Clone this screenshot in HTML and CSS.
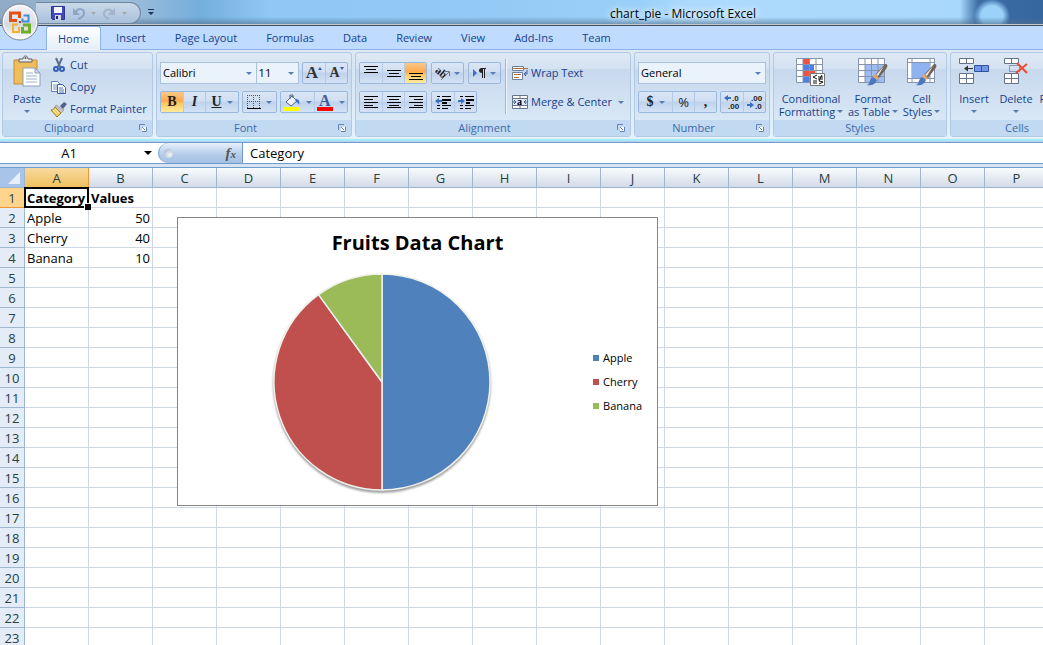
FILE: index.html
```html
<!DOCTYPE html>
<html lang="en">
<head>
<meta charset="utf-8">
<title>chart_pie - Microsoft Excel</title>
<link rel="stylesheet" href="styles.css">
</head>
<body>
<div class="app">
  <header class="titlebar">
    <button class="office" aria-label="Office Button">
      <svg width="38" height="38" viewBox="0 0 38 38">
        <defs><linearGradient id="orb" x1="0" y1="0" x2="0" y2="1"><stop offset="0" stop-color="#f4f5f8"/><stop offset=".45" stop-color="#dfe2e9"/><stop offset=".55" stop-color="#d3d7e0"/><stop offset="1" stop-color="#fff"/></linearGradient></defs>
        <circle cx="19" cy="19" r="18" fill="url(#orb)" stroke="#7c8796"/>
        <circle cx="19" cy="19" r="16.500" fill="none" stroke="#fff" stroke-opacity=".8"/>
        <g fill="none">
          <path d="M16 17.500H9.500V10h9v5" stroke="#e2521a" stroke-width="3"/>
          <path d="M22.500 12.500h5v6h-6v-3" stroke="#3f8ed8" stroke-width="2"/>
          <path d="M17 21.500h-5V29h6v-5" stroke="#f3b229" stroke-width="2"/>
          <path d="M22 22h6.500v7h-7v-5" stroke="#6fae2c" stroke-width="3"/>
        </g>
        <path d="M18 18h2v2h-2z" fill="#b0402a"/>
      </svg>
    </button>
    <div class="qat">
      <button class="qbtn" aria-label="Save"><svg width="14" height="14" viewBox="0 0 14 14"><path d="M.5.500h13v13h-12l-1-1z" fill="#4549b8" stroke="#30348f"/><path d="M3 1h8v6H3z" fill="#f4f6ff"/><path d="M4 9h6v5H4z" fill="#d3d8e8"/><path d="M5 10h2v3H5z" fill="#262a66"/></svg></button>
      <button class="qbtn" aria-label="Undo"><svg width="22" height="14" viewBox="0 0 22 14"><path d="M3 6c2-4 8-4 8 1 0 3-3 5-6 6" fill="none" stroke="#8ea4c6" stroke-width="2"/><path d="M0 2v7h7z" fill="#8ea4c6"/><path d="M18 6h5l-2.500 3z" fill="#a8a8a8"/></svg></button>
      <button class="qbtn" aria-label="Redo"><svg width="24" height="14" viewBox="0 0 24 14"><path d="M9 6C7 2 1 3 1 8c0 2 2 4 5 5" fill="none" stroke="#a3b3c9" stroke-width="2"/><path d="M12 2v7H5z" fill="#a3b3c9"/><path d="M19 6h5l-2.500 3z" fill="#a8a8a8"/></svg></button>
    </div>
    <button class="qmore" aria-label="Customize Quick Access Toolbar"><svg width="6" height="6" viewBox="0 0 6 6"><path d="M0 0h6v1H0zM0 3h6L3 6z" fill="#1d3863"/></svg></button>
    <h1 class="title">chart_pie - Microsoft Excel</h1>
  </header>

  <nav class="tabs">
    <button class="tab tab-on">Home</button>
    <button class="tab">Insert</button>
    <button class="tab">Page Layout</button>
    <button class="tab">Formulas</button>
    <button class="tab">Data</button>
    <button class="tab">Review</button>
    <button class="tab">View</button>
    <button class="tab">Add-Ins</button>
    <button class="tab">Team</button>
  </nav>

  <div class="ribbon">
    <section class="group clipboard">
      <div class="body">
        <button class="big">
          <svg width="30" height="32" viewBox="0 0 30 32"><path d="M2 5h23v24H2z" fill="#efbd5b" stroke="#c78e2f"/><path d="M7 7V4h4c0-4 5-4 5 0h4v3z" fill="#e8e8ea" stroke="#5e6068"/><circle cx="13.500" cy="3" r="1" fill="#555"/><path d="M11 13h12l5 5v13H11z" fill="#fff" stroke="#8da0bd"/><path d="M23 13v5h5z" fill="#cfdcee" stroke="#8da0bd"/><path d="M14 18h7M14 21h11M14 24h11M14 27h11" stroke="#9bb0ce"/></svg>
          <span>Paste</span><i class="caret"></i>
        </button>
        <div class="stack">
          <button class="small"><svg width="16" height="16" viewBox="0 0 16 16"><path d="M5 1l4 9M11 1l-4 9" stroke="#5d6f8e" stroke-width="2"/><circle cx="5" cy="12" r="2" fill="none" stroke="#3560b5" stroke-width="2"/><circle cx="11" cy="12" r="2" fill="none" stroke="#3560b5" stroke-width="2"/></svg><span>Cut</span></button>
          <button class="small"><svg width="16" height="16" viewBox="0 0 16 16"><path d="M.5 2.500h6l3 3v7h-9z" fill="#fff" stroke="#5f80b8"/><path d="M2 6h4M2 8h4M2 10h4" stroke="#6f93cb"/><path d="M6.500 5.500h5l3 3v6h-8z" fill="#fff" stroke="#3b5fa2"/><path d="M8 9h4M8 11h5M8 13h5" stroke="#4a74ba"/></svg><span>Copy</span></button>
          <button class="small"><svg width="16" height="16" viewBox="0 0 16 16"><path d="M9 5l4-4 3 2-4 5z" fill="#54618a"/><path d="M5 4l8 5-3 3-6-6z" fill="#c3c5cc" stroke="#777" stroke-width=".5"/><path d="M4 6l6 6-4 4-6-7c2 0 3-1 4-3z" fill="#f0cf61" stroke="#a77b20"/><path d="M2 9l4 4M4 8l4 4" stroke="#fff2a8"/></svg><span>Format Painter</span></button>
        </div>
      </div>
      <h2 class="label"><span>Clipboard</span><button class="launch" aria-label="Clipboard options"><svg width="8" height="8" viewBox="0 0 8 8"><path d="M.5 6V.500H6" fill="none" stroke="#6484b3"/><path d="M3 3h5v5H3z" fill="#fff"/><path d="M3 3l3 3M7.500 3v4.500H3" fill="none" stroke="#6484b3"/></svg></button></h2>
    </section>

    <section class="group font">
      <div class="body rows">
        <div class="row">
          <span class="combo face"><select aria-label="Font"><option>Calibri</option></select><i class="caret"></i></span>
          <span class="combo size"><select aria-label="Font size"><option>11</option></select><i class="caret"></i></span>
          <div class="set push">
            <button class="glyph grow" aria-label="Grow font">A<i class="tri-up"></i></button><button class="glyph shrink" aria-label="Shrink font">A<i class="tri-down"></i></button>
          </div>
        </div>
        <div class="row">
          <div class="set">
            <button class="glyph on"><b>B</b></button><button class="glyph"><em>I</em></button><button class="glyph wide"><u>U</u><i class="caret"></i></button>
          </div>
          <div class="set">
            <button class="wide" aria-label="Borders"><svg width="14" height="14" viewBox="0 0 14 14"><path d="M.5 0v13M6.500 0v13M12.500 0v13M0 .5h13M0 6.500h13" stroke="#555" stroke-dasharray="1 1"/><path d="M0 13.500h14" stroke="#000"/></svg><i class="caret"></i></button>
          </div>
          <div class="set">
            <button class="wide" aria-label="Fill color"><svg width="17" height="17" viewBox="0 0 17 17"><path d="M2 8l6-6 5 5-6 5z" fill="#eef3fa" stroke="#51647f"/><path d="M6 5V1h3v3" fill="none" stroke="#51647f"/><path d="M11 5c4 0 5 2 4 6-1-2-2-3-3-3z" fill="#3b6fc4"/><path d="M0 13h16v4H0z" fill="#ff0"/></svg><i class="caret"></i></button><button class="wide" aria-label="Font color"><svg width="17" height="17" viewBox="0 0 17 17"><text class="fontcolor" x="2" y="12">A</text><path d="M0 13h16v4H0z" fill="red"/></svg><i class="caret"></i></button>
          </div>
        </div>
      </div>
      <h2 class="label"><span>Font</span><button class="launch" aria-label="Font options"><svg width="8" height="8" viewBox="0 0 8 8"><path d="M.5 6V.500H6" fill="none" stroke="#6484b3"/><path d="M3 3h5v5H3z" fill="#fff"/><path d="M3 3l3 3M7.500 3v4.500H3" fill="none" stroke="#6484b3"/></svg></button></h2>
    </section>

    <section class="group alignment">
      <div class="body">
        <div class="rows">
          <div class="row">
            <div class="set">
              <button aria-label="Top align"><svg width="14" height="16" viewBox="0 0 14 16"><path d="M0 1.500h14M2 4.500h10M0 7.500h14" stroke="#000"/></svg></button><button aria-label="Middle align"><svg width="14" height="16" viewBox="0 0 14 16"><path d="M0 5.500h14M2 8.500h10M0 11.500h14" stroke="#000"/></svg></button><button class="on" aria-label="Bottom align"><svg width="14" height="16" viewBox="0 0 14 16"><path d="M0 8.500h14M2 11.500h10M0 14.500h14" stroke="#000"/></svg></button>
            </div>
            <div class="set">
              <button class="wide" aria-label="Orientation"><svg width="16" height="16" viewBox="0 0 16 16"><text class="ab" x="0" y="11" transform="rotate(40 6 8)">ab</text><path d="M6 15l8-8M10 6.500h4.500V11" fill="none" stroke="#777"/></svg><i class="caret"></i></button>
            </div>
            <div class="set">
              <button class="wide" aria-label="Text direction"><svg width="14" height="12" viewBox="0 0 14 12"><path d="M0 2l4 4-4 4z" fill="#3f6fc5"/><path d="M9.500 2v9M11.500 2v9M8 1.500h5" stroke="#222"/><path d="M9 1v5C5 6 5 1 9 1z" fill="#222"/></svg><i class="caret"></i></button>
            </div>
          </div>
          <div class="row">
            <div class="set">
              <button aria-label="Align left"><svg width="14" height="12" viewBox="0 0 14 12"><path d="M0 .5h14M0 3.500h9M0 6.500h14M0 9.500h9M0 11.500h14" stroke="#000"/></svg></button><button aria-label="Center"><svg width="14" height="12" viewBox="0 0 14 12"><path d="M0 .5h14M2 3.500h10M0 6.500h14M2 9.500h10M0 11.500h14" stroke="#000"/></svg></button><button aria-label="Align right"><svg width="14" height="12" viewBox="0 0 14 12"><path d="M0 .5h14M5 3.500h9M0 6.500h14M5 9.500h9M0 11.500h14" stroke="#000"/></svg></button>
            </div>
            <div class="set">
              <button aria-label="Decrease indent"><svg width="16" height="14" viewBox="0 0 16 14"><path d="M2 1.500h3M7 1.500h9M7 10.500h9M2 10.500h3M2 13.500h3M7 13.500h6" stroke="#000"/><path d="M7 5h9M7 8h5" stroke="#000" stroke-width="2"/><path d="M0 6l4-3v2h3v2H4v2z" fill="#3b6fc4"/></svg></button><button aria-label="Increase indent"><svg width="16" height="14" viewBox="0 0 16 14"><path d="M2 1.500h3M7 1.500h9M7 10.500h9M2 10.500h3M2 13.500h3M7 13.500h6" stroke="#000"/><path d="M8 5h8M8 8h4" stroke="#000" stroke-width="2"/><path d="M7 6L3 3v2H0v2h3v2z" fill="#3b6fc4"/></svg></button>
            </div>
          </div>
        </div>
        <div class="rows split">
          <button class="text"><svg width="16" height="16" viewBox="0 0 16 16"><path d="M.5 1.500h11v4H.5zM.5 7.500h10v7H.5z" fill="#fff" stroke="#6f7f96"/><path d="M1 3.500h15M2 9.500h7M2 12.500h5" stroke="#b0703c"/><path d="M15 5v4h-2M14 7l-2 2 2 2" fill="none" stroke="#3b5fa2"/></svg><span>Wrap Text</span></button>
          <button class="text"><svg width="16" height="16" viewBox="0 0 16 16"><path d="M.5 1.500h15v13H.5zM8 1v13M.5 4.500h15M.5 11.500h15" fill="#fff" stroke="#66758c"/><path d="M1 5h14v6H1z" fill="#dfe8f5"/><path d="M1 8h3M12 8h3M2 6l2 2-2 2M14 6l-2 2 2 2" fill="none" stroke="#3b5fa2"/><text class="a" x="5" y="11">a</text></svg><span>Merge &amp; Center</span><i class="caret"></i></button>
        </div>
      </div>
      <h2 class="label"><span>Alignment</span><button class="launch" aria-label="Alignment options"><svg width="8" height="8" viewBox="0 0 8 8"><path d="M.5 6V.500H6" fill="none" stroke="#6484b3"/><path d="M3 3h5v5H3z" fill="#fff"/><path d="M3 3l3 3M7.500 3v4.500H3" fill="none" stroke="#6484b3"/></svg></button></h2>
    </section>

    <section class="group number">
      <div class="body rows">
        <div class="row">
          <span class="combo format"><select aria-label="Number format"><option>General</option></select><i class="caret"></i></span>
        </div>
        <div class="row">
          <div class="set">
            <button class="glyph wide"><b>$</b><i class="caret"></i></button><button class="pct">%</button><button class="glyph"><b>,</b></button>
          </div>
          <div class="set push">
            <button aria-label="Increase decimal"><svg width="16" height="14" viewBox="0 0 16 14"><path d="M0 3l4-3v2h3v2H4v2z" fill="#3b6fc4"/><text class="dec" x="8" y="6">.0</text><text class="dec" x="4" y="14">.00</text></svg></button><button aria-label="Decrease decimal"><svg width="16" height="14" viewBox="0 0 16 14"><path d="M7 10L3 7v2H0v2h3v2z" fill="#3b6fc4"/><text class="dec" x="4" y="6">.00</text><text class="dec" x="8" y="14">.0</text></svg></button>
          </div>
        </div>
      </div>
      <h2 class="label"><span>Number</span><button class="launch" aria-label="Number options"><svg width="8" height="8" viewBox="0 0 8 8"><path d="M.5 6V.500H6" fill="none" stroke="#6484b3"/><path d="M3 3h5v5H3z" fill="#fff"/><path d="M3 3l3 3M7.500 3v4.500H3" fill="none" stroke="#6484b3"/></svg></button></h2>
    </section>

    <section class="group styles">
      <div class="body">
        <button class="big">
          <svg width="30" height="32" viewBox="0 0 30 32"><path d="M.5 3.500h26v24H.5z" fill="#fff"/><path d="M7 4h6v6H7z" fill="#ee5140"/><path d="M7 10h11v6H7z" fill="#4f7fe0"/><path d="M7 16h12v6H7z" fill="#ee5140"/><path d="M7 22h6v6H7z" fill="#4f7fe0"/><path d="M.5 3.500h26v24H.5zM7 3v25M13.500 3v25M20 3v25M0 9.500h27M0 15.500h27M0 21.500h27" fill="none" stroke="#8493ae"/><path d="M14.500 18.500h14v12h-14z" fill="#fff" stroke="#777"/><path d="M21 20l-4 2 4 2M17 26h4M17 28h4M22 22h5M22 24h5M26 20l-3 6M23 26l4 1-4 2" fill="none" stroke="#111"/></svg>
          <span>Conditional</span><span>Formatting <i class="caret"></i></span>
        </button>
        <button class="big">
          <svg width="30" height="32" viewBox="0 0 30 32"><path d="M.5 3.500h26v24H.5z" fill="#fff"/><path d="M7 9h20v19H7z" fill="#9dbcf2"/><path d="M.5 3.500h26v24H.5zM7 3v25M13.500 3v25M20 3v25M0 9.500h27M0 15.500h27M0 21.500h27" fill="none" stroke="#8493ae"/><path d="M27 9c3 0 3 2 1 5l-8 10-4-3z" fill="#74635a"/><path d="M26 11l-8 9 2 1z" fill="#efe7dc"/><path d="M17 19l4 4-2 2-4-3z" fill="#e5a66b"/><path d="M15 22l4 3c-2 5-7 6-10 5 4-2 2-6 6-8z" fill="#4e76c0"/></svg>
          <span>Format</span><span>as Table <i class="caret"></i></span>
        </button>
        <button class="big">
          <svg width="30" height="32" viewBox="0 0 30 32"><path d="M.5 3.500h27v24H.5z" fill="#fff" stroke="#8493ae"/><path d="M5 3v25M23 3v25M0 7.500h28M0 23.500h28" stroke="#8493ae"/><path d="M5 8h18v15H5z" fill="#8fb2f0"/><path d="M27 9c3 0 3 2 1 5l-8 10-4-3z" fill="#74635a"/><path d="M26 11l-8 9 2 1z" fill="#efe7dc"/><path d="M17 19l4 4-2 2-4-3z" fill="#e5a66b"/><path d="M15 22l4 3c-2 5-7 6-10 5 4-2 2-6 6-8z" fill="#4e76c0"/></svg>
          <span>Cell</span><span>Styles <i class="caret"></i></span>
        </button>
      </div>
      <h2 class="label"><span>Styles</span></h2>
    </section>

    <section class="group cells">
      <div class="body">
        <button class="big">
          <svg width="30" height="32" viewBox="0 0 30 32"><path d="M.5 3.500h14v5H.5zM7.500 3v5M.5 18.500h14v10H.5zM7.500 18v10M.5 23.500h14" fill="#fff" stroke="#65738c"/><path d="M15.500 10.500h14v6h-14zM22.500 10v6" fill="#7197e6" stroke="#31539c"/><path d="M6 13.500h8" stroke="#333"/><path d="M5 13.500l4-3v6z" fill="#333"/></svg>
          <span>Insert</span><i class="caret"></i>
        </button>
        <button class="big">
          <svg width="30" height="32" viewBox="0 0 30 32"><path d="M3.500 3.500h14v5h-14zM10.500 3v5M3.500 18.500h14v10h-14zM10.500 18v10M3.500 23.500h14" fill="#fff" stroke="#65738c"/><path d="M8.500 10.500h10v6h-10z" fill="none" stroke="#31539c" stroke-dasharray="1 1"/><path d="M16 8l10 10M26 9L15 18" stroke="#ee4a2d" stroke-width="2"/></svg>
          <span>Delete</span><i class="caret"></i>
        </button>
        <button class="big">
          <svg width="30" height="32" viewBox="0 0 30 32"><path d="M5.500 10.500h20v12h-20z" fill="#fff" stroke="#65738c"/></svg>
          <span>Format</span><i class="caret"></i>
        </button>
      </div>
      <h2 class="label"><span>Cells</span></h2>
    </section>
  </div>

  <div class="formulabar">
    <input class="namebox" aria-label="Name box" value="A1">
    <button class="namedrop" aria-label="Names"><i></i></button>
    <div class="fx"><i class="knob"></i><button aria-label="Insert function"><em>f<small>x</small></em></button></div>
    <input class="formula" aria-label="Formula" value="Category">
  </div>

  <main class="sheet">
    <table class="grid">
      <colgroup><col class="rowhead"><col><col><col><col><col><col><col><col><col><col><col><col><col><col><col><col class="last"></colgroup>
      <thead><tr><th class="corner"><svg width="24" height="19" viewBox="0 0 24 19"><path d="M20 4v12H8z" fill="#e9eff9"/></svg></th><th class="sel">A</th><th>B</th><th>C</th><th>D</th><th>E</th><th>F</th><th>G</th><th>H</th><th>I</th><th>J</th><th>K</th><th>L</th><th>M</th><th>N</th><th>O</th><th>P</th></tr></thead>
      <tbody>
        <tr><th class="sel">1</th><td class="active"><b>Category</b></td><td><b>Values</b></td><td><td><td><td><td> <td><td><td><td><td> <td><td><td><td></tr>
        <tr><th>2</th><td>Apple</td><td class="num">50</td><td><td><td><td><td> <td><td><td><td><td> <td><td><td><td></tr>
        <tr><th>3</th><td>Cherry</td><td class="num">40</td><td><td><td><td><td> <td><td><td><td><td> <td><td><td><td></tr>
        <tr><th>4</th><td>Banana</td><td class="num">10</td><td><td><td><td><td> <td><td><td><td><td> <td><td><td><td></tr>
        <tr><th>5</th><td><td><td><td> <td><td><td><td> <td><td><td><td> <td><td><td><td></tr>
        <tr><th>6</th><td><td><td><td> <td><td><td><td> <td><td><td><td> <td><td><td><td></tr>
        <tr><th>7</th><td><td><td><td> <td><td><td><td> <td><td><td><td> <td><td><td><td></tr>
        <tr><th>8</th><td><td><td><td> <td><td><td><td> <td><td><td><td> <td><td><td><td></tr>
        <tr><th>9</th><td><td><td><td> <td><td><td><td> <td><td><td><td> <td><td><td><td></tr>
        <tr><th>10</th><td><td><td><td> <td><td><td><td> <td><td><td><td> <td><td><td><td></tr>
        <tr><th>11</th><td><td><td><td> <td><td><td><td> <td><td><td><td> <td><td><td><td></tr>
        <tr><th>12</th><td><td><td><td> <td><td><td><td> <td><td><td><td> <td><td><td><td></tr>
        <tr><th>13</th><td><td><td><td> <td><td><td><td> <td><td><td><td> <td><td><td><td></tr>
        <tr><th>14</th><td><td><td><td> <td><td><td><td> <td><td><td><td> <td><td><td><td></tr>
        <tr><th>15</th><td><td><td><td> <td><td><td><td> <td><td><td><td> <td><td><td><td></tr>
        <tr><th>16</th><td><td><td><td> <td><td><td><td> <td><td><td><td> <td><td><td><td></tr>
        <tr><th>17</th><td><td><td><td> <td><td><td><td> <td><td><td><td> <td><td><td><td></tr>
        <tr><th>18</th><td><td><td><td> <td><td><td><td> <td><td><td><td> <td><td><td><td></tr>
        <tr><th>19</th><td><td><td><td> <td><td><td><td> <td><td><td><td> <td><td><td><td></tr>
        <tr><th>20</th><td><td><td><td> <td><td><td><td> <td><td><td><td> <td><td><td><td></tr>
        <tr><th>21</th><td><td><td><td> <td><td><td><td> <td><td><td><td> <td><td><td><td></tr>
        <tr><th>22</th><td><td><td><td> <td><td><td><td> <td><td><td><td> <td><td><td><td></tr>
        <tr><th>23</th><td><td><td><td> <td><td><td><td> <td><td><td><td> <td><td><td><td></tr>
      </tbody>
    </table>
    <figure class="chart">
      <figcaption>Fruits Data Chart</figcaption>
      <div class="plot">
        <svg class="pie" width="224" height="224" viewBox="-112 -112 224 224" role="img" aria-label="Apple 50, Cherry 40, Banana 10">
          <g stroke="#f1f1ec" stroke-width="1.500" stroke-linejoin="round">
            <path d="M0 0V-108A108 108 0 0 1 0 108Z" fill="#4f81bd"/>
            <path d="M0 0V108A108 108 0 0 1 -63.480 -87.370Z" fill="#c0504d"/>
            <path d="M0 0L-63.480 -87.370A108 108 0 0 1 0 -108Z" fill="#9bbb59"/>
          </g>
        </svg>
        <ul class="legend"><li class="apple">Apple</li><li class="cherry">Cherry</li><li class="banana">Banana</li></ul>
      </div>
    </figure>
  </main>
</div>
</body>
</html>
```

FILE: styles.css
```css
* { box-sizing: border-box; }
body { margin: 0; font: 12px/14px "Open Sans", "Noto Sans", sans-serif; color: #15428b; background: #fff; }
button, input, select { font: inherit; color: inherit; margin: 0; padding: 0; border: 0; background: none; border-radius: 0; }
h1, h2, ul, figure { margin: 0; padding: 0; font-weight: normal; font-size: inherit; }
svg { display: block; flex: none; overflow: visible; }
.app { display: flex; flex-direction: column; height: 100vh; overflow: hidden; }

/* Title bar */
.titlebar { position: relative; display: flex; align-items: flex-start; flex: none; height: 26px; padding: 2px 0 0 36px; border-bottom: 1px solid #3c4b5e;
  background: linear-gradient(#0000 17px, #4f708f99 24px, #c3c8cb 24px), radial-gradient(ellipse 18px 17px at 992px 16px, #9ad2fa 60%, #9ad2fa00), linear-gradient(90deg, #8fabc6, #9dbcd8 130px, #74aedd 200px, #8fc8f5 270px, #94caf4 500px, #9ad0f8 640px, #addafd 690px, #a8d8fc 960px, #3c6da5 978px, #36669e); }
.office { position: absolute; z-index: 2; left: 1px; top: 3px; border-radius: 50%; }
.qat { display: flex; align-items: center; gap: 8px; width: 105px; height: 22px; padding-left: 15px; border: 1px solid #71869c; border-left: 0; border-radius: 0 11px 11px 0; background: linear-gradient(#c9d9e9, #a9c1dc); }
.qmore { display: grid; place-items: center; width: 20px; height: 20px; }
.title { flex: 1; padding-left: 162px; text-align: center; color: #000; font-size: 12px; line-height: 24px; text-shadow: 0 0 6px #fff, 0 0 8px #fff; white-space: nowrap; }

/* Tabs */
.tabs { display: flex; flex: none; align-items: flex-end; height: 24px; padding-left: 46px; background: #bfdbff; border-bottom: 1px solid #8db2e3; }
.tab { height: 23px; padding: 0 14px 0 15px; font-size: 11px; white-space: nowrap; }
.tab-on { height: 24px; margin-bottom: -1px; padding: 0 11px; border: 1px solid #8db2e3; border-bottom: 0; border-radius: 3px 3px 0 0; background: linear-gradient(#fff, #e4edf8); box-shadow: inset 0 0 2px #fff; }

/* Ribbon */
.ribbon { display: flex; flex: none; gap: 3px; height: 91px; padding: 2px 2px 2px; overflow: hidden; background: linear-gradient(#dfeaf6, #d5e4f4 20%, #e3f3fc); border-bottom: 2px solid #a5eafa; }
.group { display: flex; flex-direction: column; flex: none; border: 1px solid #b2c9e3; border-radius: 3px; overflow: hidden; background: linear-gradient(#dfe9f5, #d3e1f1 16px, #c8d8ed 16px, #d9e8f6 68px); }
.clipboard { width: 151px; }
.font { width: 196px; }
.alignment { width: 276px; }
.number { width: 136px; }
.styles { width: 174px; }
.cells { width: 134px; }
.body { display: flex; flex: 1; padding: 0 3px; }
.label { display: flex; align-items: center; height: 16px; padding: 0 5px 0 0; background: #c1d9f1; color: #3e6aaa; font-size: 11px; }
.label span { flex: 1; padding-right: 4px; text-align: center; }
.cells .label, .styles .label { padding: 0; }
.cells .label span, .styles .label span { padding: 0; }
.caret { display: inline-block; flex: none; width: 6px; height: 3px; border: 3px solid transparent; border-top-color: #567db1; border-bottom: 0; }

.big { display: flex; flex-direction: column; align-items: center; padding-top: 2px; font-size: 11px; line-height: 13px; white-space: nowrap; }
.big svg { margin-bottom: 5px; }
.big > .caret { margin-top: 5px; }
.big span { display: flex; align-items: center; gap: 2px; }
.clipboard .big { width: 42px; }
.styles .body { padding: 0 2px; }
.styles .big:nth-child(1) { width: 70px; }
.styles .big:nth-child(2) { width: 54px; }
.styles .big:nth-child(3) { width: 43px; }
.cells .body { padding: 0 2px; }
.cells .big { width: 42px; }
.stack { display: flex; flex-direction: column; padding-top: 1px; }
.small { display: flex; align-items: center; gap: 3px; height: 22px; padding-left: 3px; font-size: 11px; white-space: nowrap; }

.rows { display: flex; flex-direction: column; gap: 7px; padding-top: 9px; }
.row { display: flex; gap: 3px; height: 22px; }
.push { margin-left: auto; }
.set { display: flex; border: 1px solid #9ab8dd; border-radius: 2px; background: linear-gradient(#dbe6f5, #cfdef1 45%, #bfd2ec 50%, #d3e2f5); }
.set button { display: flex; align-items: center; justify-content: center; gap: 5px; width: 22px; height: 20px; }
.set button + button { border-left: 1px solid #b5cbe8; }
.set button.wide { width: 33px; }
.set .on { background: linear-gradient(#fbc988, #fba94b 45%, #fdc65e 55%, #feeb9c); }
.glyph { font: bold 14px/20px "Liberation Serif", serif; color: #222; }
.glyph em { font-weight: bold; }
.set .grow, .set .shrink { gap: 0; align-items: center; color: #333; }
.set .grow { font-size: 17px; }
.tri-up, .tri-down { align-self: flex-start; margin-top: 4px; border: 2px solid transparent; }
.tri-up { border-bottom: 3px solid #3b5fa2; border-top: 0; }
.tri-down { border-top: 3px solid #3b5fa2; border-bottom: 0; }
.pct { color: #222; font-size: 13px; }
.combo { display: grid; align-items: center; border: 1px solid #abc1de; background: #eaf2fb; color: #000; }
.combo select { grid-area: 1 / 1; width: 100%; height: 20px; padding-left: 2px; appearance: none; font-size: 11px; }
.combo .caret { grid-area: 1 / 1; justify-self: end; margin-right: 4px; pointer-events: none; }
.face { width: 98px; }
.size { width: 44px; margin-left: -4px; }
.format { flex: 1; }
.alignment .row .set + .set { margin-left: 1px; }
.alignment .row:first-child .wide { gap: 3px; width: 31px; }
.split { margin: 6px 0 6px 4px; padding: 3px 0 0 6px; border-left: 1px solid #9ab8dd; box-shadow: inset 1px 0 #eef5fc; }
.text { display: flex; align-items: center; gap: 3px; height: 22px; font-size: 11px; white-space: nowrap; }
.text .caret { margin-left: 3px; }
.ab { font: bold 11px "Liberation Serif", serif; fill: #222; }
.a { font: bold 10px "Liberation Serif", serif; fill: #000; }
.fontcolor { font: bold 16px "Liberation Serif", serif; fill: #3a5a9c; }
.dec { font: bold 8px "Liberation Sans", sans-serif; fill: #222; }

/* Formula bar */
.formulabar { display: flex; flex: none; height: 26px; padding: 2px 0 4px; background: linear-gradient(#b9d1ee 1px, #6f9cc8 1px 2px, #fff 2px 22px, #6f9cc8 22px 23px, #d5e3f5 23px); color: #000; font-size: 13px; }
.namebox { width: 138px; height: 20px; text-align: center; line-height: 20px; outline: 0; }
.namedrop { display: grid; place-items: center; width: 20px; }
.namedrop i { border: 4px solid transparent; border-top-color: #000; border-bottom: 0; }
.fx { display: flex; align-items: center; justify-content: space-between; width: 85px; padding: 0 6px 0 5px; border: solid #6f9cc8; border-width: 0 1px 0 1px; border-radius: 11px 0 0 11px; background: linear-gradient(#e6effa, #b3cbea 60%, #a5c0e5); }
.knob { width: 9px; height: 9px; border-radius: 50%; background: radial-gradient(circle at 65% 65%, #f5f7fb, #9eadc6); }
.fx em { font: italic bold 15px/18px "Liberation Serif", serif; color: #555; }
.fx small { font-size: 11px; }
.formula { flex: 1; min-width: 0; height: 20px; padding-left: 7px; line-height: 20px; outline: 0; }

/* Worksheet */
.sheet { position: relative; flex: 1; min-height: 0; overflow: hidden; border-top: 1px solid #6f9cc8; font-size: 13px; color: #000; }
.grid { width: 100%; min-width: 1049px; table-layout: fixed; border-collapse: separate; border-spacing: 0; }
.grid col { width: 64px; }
.grid .rowhead { width: 25px; }
.grid .last { width: auto; }
.grid th, .grid td { height: 20px; padding: 0 2px; line-height: 18px; border: solid #d0d7e5; border-width: 0 1px 1px 0; white-space: nowrap; }
.grid td { text-align: left; }
.grid .num { text-align: right; }
.grid th { padding: 0; font-weight: normal; color: #27413e; border-color: #9eb6ce; background: #e4ecf7; }
.grid thead th { background: linear-gradient(#f9fcfd, #d3dbe9); }
.grid thead .corner { background: #a9c4e9; }
.grid thead .sel { background: linear-gradient(#f8d99f, #f1c15f); border-color: #f29536; }
.grid tbody .sel { background: #ffd58d; border-color: #f29536; }
.grid .active { position: relative; }
.active::before { content: ""; position: absolute; inset: -1px; border: 2px solid #000; }
.active::after { content: ""; position: absolute; right: -3px; bottom: -3px; width: 6px; height: 6px; border: 1px solid #fff; border-width: 1px 0 0 1px; background: #000; }

/* Chart */
.chart { position: absolute; left: 177px; top: 49px; display: flex; flex-direction: column; width: 481px; height: 289px; border: 1px solid #868686; background: #fff; }
.chart figcaption { height: 52px; text-align: center; font: bold 20px/50px "Open Sans", sans-serif; }
.plot { display: flex; align-items: center; justify-content: space-between; padding: 0 15px 0 92px; }
.pie { filter: drop-shadow(0 2px 1px #0006); }
.legend { list-style: none; font-size: 11px; line-height: 24px; }
.legend li { display: flex; align-items: center; gap: 4px; }
.legend li::before { content: ""; width: 6px; height: 6px; background: #4f81bd; }
.legend .cherry::before { background: #c0504d; }
.legend .banana::before { background: #9bbb59; }
```
